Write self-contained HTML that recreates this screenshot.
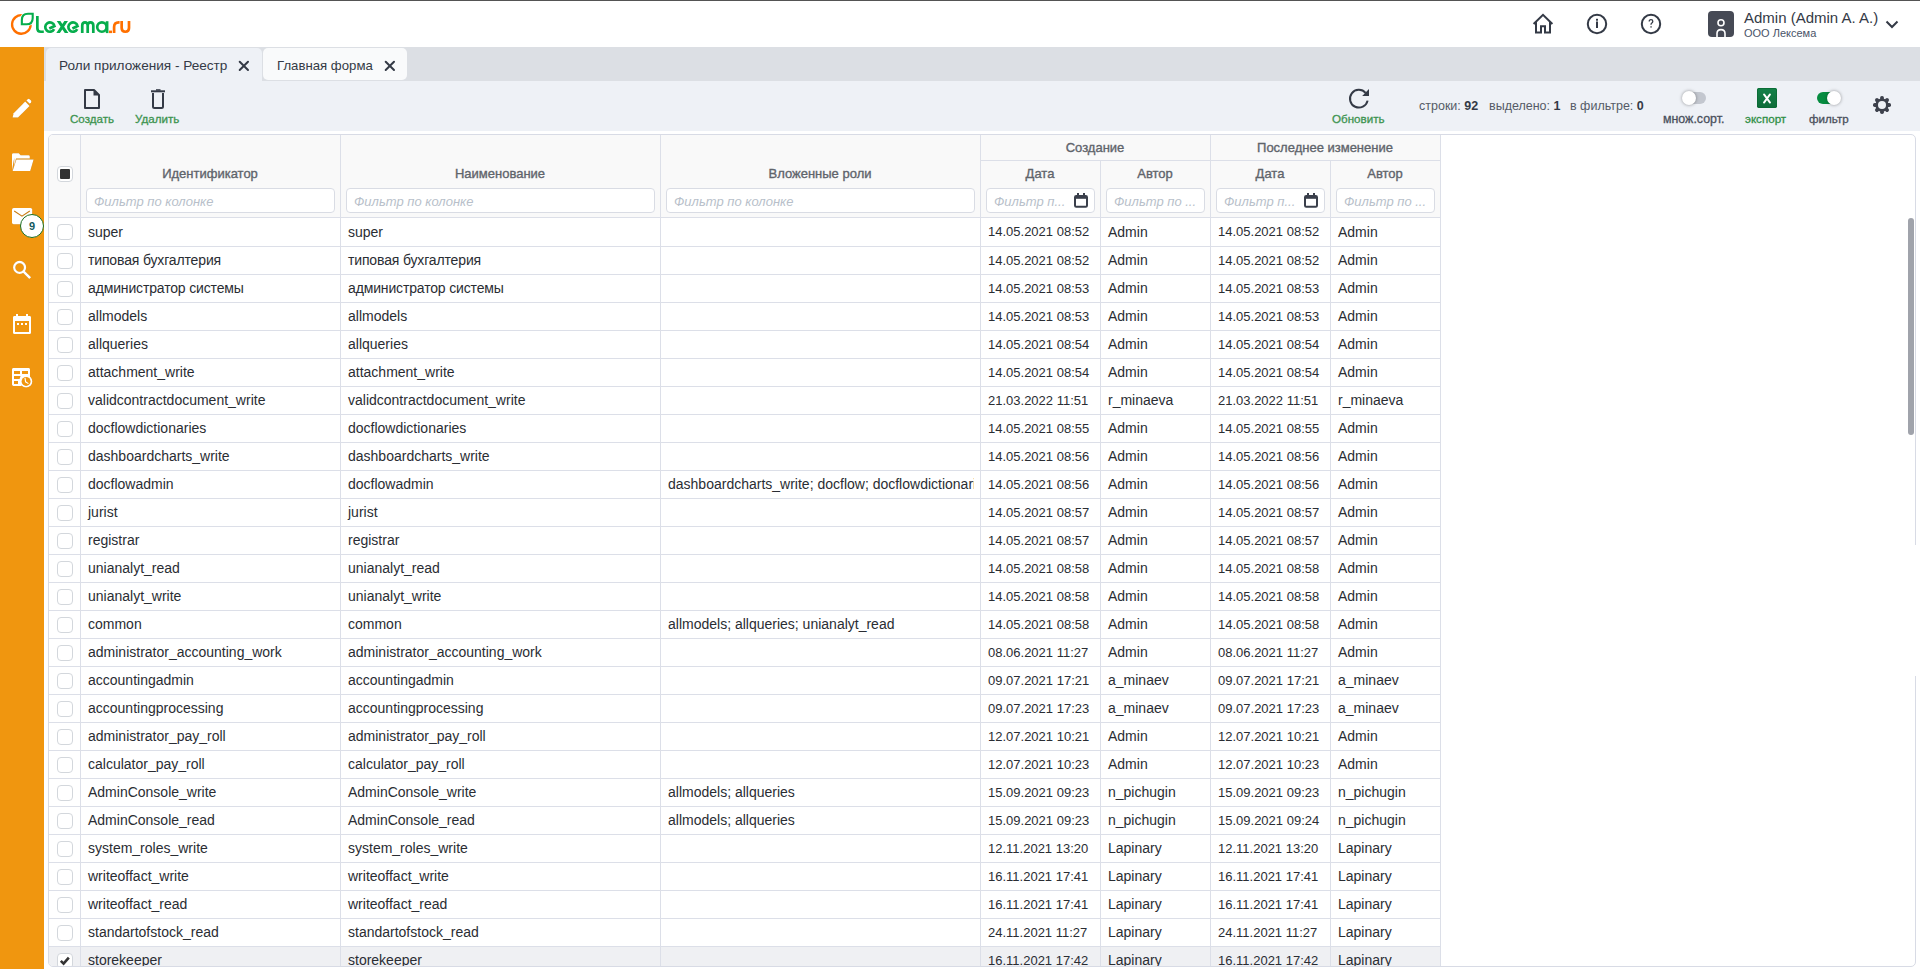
<!DOCTYPE html>
<html><head><meta charset="utf-8">
<style>
*{box-sizing:border-box;margin:0;padding:0}
html,body{width:1920px;height:969px;overflow:hidden;background:#fff;font-family:"Liberation Sans",sans-serif;color:#212529}
.abs{position:absolute}
#topline{position:absolute;left:0;top:0;width:1920px;height:1px;background:#545454}
#sidebar{position:absolute;left:0;top:47px;width:44px;height:922px;background:#f0960f}
#tabbar{position:absolute;left:44px;top:47px;width:1876px;height:34px;background:#dcdfe4}
.tab{position:absolute;top:48px;height:33px;border-radius:5px 5px 0 0;font-size:13.6px;color:#343a46;white-space:nowrap}
#toolbar{position:absolute;left:44px;top:81px;width:1876px;height:50px;background:#eef1f6}
.tbl{font-size:11.6px;font-weight:normal;-webkit-text-stroke:0.3px currentColor;color:#3d9450;position:absolute;white-space:nowrap}
#grid{position:absolute;left:48px;top:134px;width:1868px;height:833px;border:1px solid #d8dbe5;border-radius:5px;overflow:hidden;background:#fff}
#head{position:absolute;left:0;top:0;width:1391px;height:82px;background:#f9f9f9}
.vl{position:absolute;width:1px;background:#dcdfe8}
.hl{position:absolute;left:0;width:1391px;height:1px;background:#dcdfe8}
.row{position:absolute;left:0;width:1391px}
.row.sel{background:#eff0f3}
.c{position:absolute;padding-left:7px;font-size:14px;white-space:nowrap;overflow:hidden;color:#2a2d33}
.c.date{font-size:13px}
.cb{position:absolute;left:8px;width:16px;height:16px;border:1px solid #d3d7dc;border-radius:4px;background:#fff}
.hd{position:absolute;margin-top:1px;font-size:13px;font-weight:normal;-webkit-text-stroke:0.35px currentColor;color:#60646b;text-align:center;white-space:nowrap}
.fi{position:absolute;top:53px;height:25px;border:1px solid #d9dce4;border-radius:4px;background:#fff;font-size:13px;font-style:italic;color:#b8bfca;padding-left:7px;line-height:25px;white-space:nowrap;overflow:hidden}
</style></head><body>
<div id="topline"></div>

<!-- logo -->
<svg class="abs" style="left:0;top:0" width="140" height="47" viewBox="0 0 140 47"><defs><clipPath id="xclip"><rect x="50" y="21" width="25" height="12.1"/></clipPath></defs>
  <path d="M 22.48 15.22 A 9.3 9.3 0 1 0 30.65 24.45" fill="none" stroke="#ff7000" stroke-width="2.3"/>
  <path d="M 21.85 24.3 L 21.85 20 Q 21.85 13.8 28 13.8 L 32.7 13.8 L 32.7 18 Q 32.7 24.3 26.5 24.3 Z" fill="none" stroke="#fff" stroke-width="3.6" stroke-linejoin="miter"/>
  <path d="M 21.85 24.3 L 21.85 20 Q 21.85 13.8 28 13.8 L 32.7 13.8 L 32.7 18 Q 32.7 24.3 26.5 24.3 Z" fill="none" stroke="#06ad4c" stroke-width="2.1" stroke-linejoin="miter"/>
  <g fill="none" stroke="#06ad4c" stroke-width="2.7">
    <path d="M 37.35 15.9 L 37.35 28.2 Q 37.35 31.75 40.9 31.75 L 43.8 31.75"/>
    <path d="M 54.47 25.75 A 4.7 4.7 0 1 0 54.14 29.18 M 49.3 28.5 L 55.6 25.5"/>
    <path d="M 57.6 19.6 L 67.6 34.5 M 67.1 19.6 L 57.1 34.5" stroke-width="3" clip-path="url(#xclip)"/>
    <path d="M 77.57 25.75 A 4.7 4.7 0 1 0 77.24 29.18 M 72.4 28.5 L 78.7 25.5"/>
    <path d="M 82.25 33.1 L 82.25 25.6 Q 82.25 22.35 85 22.35 Q 87.7 22.35 87.7 25.6 L 87.7 33.1 M 87.7 25.6 Q 87.7 22.35 90.5 22.35 Q 93.3 22.35 93.3 25.6 L 93.3 33.1"/>
    <circle cx="101.9" cy="27.05" r="4.7"/>
    <path d="M 107.1 21.2 L 107.1 33.1"/>
  </g>
  <g fill="none" stroke="#ff7000" stroke-width="2.7">
    <path d="M 109 31.85 L 112 31.85" stroke-width="2.5"/>
    <path d="M 114.1 33.1 L 114.1 27 Q 114.1 22.35 118.8 22.35 L 119.6 22.35"/>
    <path d="M 121.65 21 L 121.65 28 Q 121.65 31.75 125.3 31.75 Q 129 31.75 129 28 L 129 21"/>
  </g>
</svg>
<!-- header right icons -->
<svg class="abs" style="left:1530px;top:12px" width="26" height="24" viewBox="0 0 26 24">
  <path d="M 3.6 12 L 13 2.8 L 22.4 12 M 6 10 L 6 20.5 L 11 20.5 L 11 14.2 L 15 14.2 L 15 20.5 L 20 20.5 L 20 10" fill="none" stroke="#343a46" stroke-width="2" stroke-linejoin="miter"/>
</svg>
<svg class="abs" style="left:1585px;top:12px" width="24" height="24" viewBox="0 0 24 24">
  <circle cx="12" cy="12" r="9.2" fill="none" stroke="#343a46" stroke-width="2"/>
  <rect x="11" y="9.5" width="2" height="6.5" fill="#343a46"/><rect x="11" y="6.8" width="2" height="1.9" fill="#343a46"/>
</svg>
<svg class="abs" style="left:1639px;top:12px" width="24" height="24" viewBox="0 0 24 24">
  <circle cx="12" cy="12" r="9.2" fill="none" stroke="#343a46" stroke-width="2"/>
  <path d="M 10.2 9.6 Q 10.2 7.6 12 7.6 Q 13.8 7.6 13.8 9.3 Q 13.8 10.5 12.6 11.2 Q 12 11.6 12 12.8" fill="none" stroke="#343a46" stroke-width="1.3"/>
  <rect x="11.4" y="14.2" width="1.3" height="1.4" fill="#343a46"/>
</svg>
<svg class="abs" style="left:1708px;top:11px" width="26" height="26" viewBox="0 0 26 26">
  <rect x="0" y="0" width="26" height="26" rx="4" fill="#464a55"/>
  <circle cx="13" cy="11.7" r="3" fill="none" stroke="#fff" stroke-width="1.6"/>
  <path d="M 9 26 L 9 22.5 Q 9 18.6 13 18.6 Q 17 18.6 17 22.5 L 17 26" fill="none" stroke="#fff" stroke-width="1.6"/>
</svg>
<div class="abs" style="left:1744px;top:9px;font-size:15px;color:#343a46;white-space:nowrap;line-height:18px">Admin (Admin A. A.)</div>
<div class="abs" style="left:1744px;top:27px;font-size:11px;color:#4a5468;white-space:nowrap;line-height:13px">ООО Лексема</div>
<svg class="abs" style="left:1884px;top:18px" width="16" height="12" viewBox="0 0 16 12">
  <path d="M 2.5 3.5 L 8 9 L 13.5 3.5" fill="none" stroke="#343a46" stroke-width="2"/>
</svg>

<!-- sidebar -->
<div id="sidebar"></div>
<svg class="abs" style="left:0;top:80px;filter:drop-shadow(0.8px 0.8px 0.6px rgba(90,50,0,.45))" width="44" height="320" viewBox="0 80 44 320">
  <g fill="#fff">
    <!-- pencil -->
    <path d="M 12.6 117.6 L 13.6 113.2 L 25.2 101.6 L 29.6 106 L 18 117.6 Z"/>
    <path d="M 26.4 100.4 L 27.6 99.2 Q 28.6 98.4 29.6 99.2 L 31 100.6 Q 31.8 101.6 31 102.6 L 29.8 103.8 Z" />
    <!-- folder -->
    <path d="M 12 170.5 L 12 154.5 Q 12 153.3 13.2 153.3 L 18.8 153.3 L 20.6 155.2 L 28.6 155.2 Q 29.8 155.2 29.8 156.4 L 29.8 158.6 L 16 158.6 L 14.2 166 L 14.2 158 Z"/>
    <path d="M 16.4 159.6 L 33.6 159.6 L 30.2 171 L 12.6 171 Z"/>
    <!-- mail -->
    <rect x="12" y="208" width="20.2" height="16.2" rx="1.6"/>
    <!-- search -->
    <circle cx="19.6" cy="267.4" r="5.4" fill="none" stroke="#fff" stroke-width="2.3"/>
    <path d="M 23.4 271.4 L 30.2 278.2" stroke="#fff" stroke-width="2.6"/>
    <!-- calendar -->
    <path fill-rule="evenodd" d="M 13 317.2 Q 13 316 14.2 316 L 29.8 316 Q 31 316 31 317.2 L 31 332.8 Q 31 334 29.8 334 L 14.2 334 Q 13 334 13 332.8 Z M 15 321 L 15 332 L 29 332 L 29 321 Z"/>
    <rect x="16" y="314" width="2" height="3"/><rect x="26" y="314" width="2" height="3"/>
    <rect x="17" y="323" width="2" height="2"/><rect x="21" y="323" width="2" height="2"/><rect x="25" y="323" width="2" height="2"/>
    <!-- table clock -->
    <path fill-rule="evenodd" d="M 12 369.4 Q 12 368 13.4 368 L 28.6 368 Q 30 368 30 369.4 L 30 377 L 21 386 L 13.4 386 Q 12 386 12 384.6 Z M 14 371 L 14 374 L 20 374 L 20 371 Z M 22 371 L 22 374 L 28 374 L 28 371 Z M 14 376 L 14 379 L 19.5 379 L 20.5 376 Z M 14 381 L 14 384 L 18 384 L 18 381 Z"/>
    <circle cx="26.1" cy="381.4" r="6.2"/>
  </g>
  <path d="M 14.2 211 L 22 216.2 L 29.8 211" fill="none" stroke="#c97c12" stroke-width="1.1"/>
  <circle cx="26.1" cy="381.4" r="4.5" fill="#f0960f"/>
  <path d="M 25 377.8 L 25.6 381.8 L 28.4 383.6" fill="none" stroke="#fff" stroke-width="1.1"/>
</svg>
<div class="abs" style="left:20px;top:214px;width:24px;height:24px;border-radius:12px;border:1.4px solid #1a6e20;background:#fff;color:#13595e;font-weight:bold;font-size:11px;text-align:center;line-height:23px">9</div>

<!-- tabs -->
<div id="tabbar"></div>
<div class="tab" style="left:46px;width:216px;height:33px;background:#eef1f6">
  <span class="abs" style="left:13px;top:10px;line-height:16px">Роли приложения - Реестр</span>
  <svg class="abs" style="left:192px;top:12px" width="12" height="12" viewBox="0 0 12 12"><path d="M 1.7 1.7 L 10 10 M 10 1.7 L 1.7 10" stroke="#343a46" stroke-width="2" stroke-linecap="round"/></svg>
</div>
<div class="tab" style="left:263px;width:144px;height:32px;background:#f9fafb;border-radius:5px;font-size:13.2px">
  <span class="abs" style="left:14px;top:10px;line-height:16px">Главная форма</span>
  <svg class="abs" style="left:121px;top:12px" width="12" height="12" viewBox="0 0 12 12"><path d="M 1.7 1.7 L 10 10 M 10 1.7 L 1.7 10" stroke="#343a46" stroke-width="2" stroke-linecap="round"/></svg>
</div>

<!-- toolbar -->
<div id="toolbar"></div>
<svg class="abs" style="left:83px;top:88px" width="18" height="22" viewBox="0 0 18 22">
  <path d="M 2 2 L 11 2 L 16 7 L 16 20 L 2 20 Z" fill="none" stroke="#343a46" stroke-width="2" stroke-linejoin="round"/>
  <path d="M 10.5 2 L 10.5 7.5 L 16 7.5 Z" fill="#343a46"/>
</svg>
<div class="tbl" style="left:70px;top:112px">Создать</div>
<svg class="abs" style="left:149px;top:88px" width="18" height="22" viewBox="0 0 18 22">
  <rect x="2" y="2.3" width="14" height="2" fill="#343a46"/>
  <rect x="7" y="1.2" width="4.5" height="1.5" fill="#343a46"/>
  <path d="M 4 5 L 4 18.5 Q 4 20 5.5 20 L 12.5 20 Q 14 20 14 18.5 L 14 5" fill="none" stroke="#343a46" stroke-width="2"/>
</svg>
<div class="tbl" style="left:135px;top:112px">Удалить</div>

<svg class="abs" style="left:1347px;top:86px" width="24" height="24" viewBox="0 0 24 24">
  <path d="M 18.6 6.8 A 8.9 8.9 0 1 0 20.6 14.6" fill="none" stroke="#343a46" stroke-width="2"/>
  <path d="M 22 3 L 22 10 L 15.2 10 Z" fill="#343a46"/>
</svg>
<div class="tbl" style="left:1332px;top:112px">Обновить</div>

<div class="abs" style="left:1419px;top:99px;font-size:12.5px;color:#555b66;white-space:nowrap;line-height:14px">строки: <b style="color:#343a46">92</b></div>
<div class="abs" style="left:1489px;top:99px;font-size:12.5px;color:#555b66;white-space:nowrap;line-height:14px">выделено: <b style="color:#343a46">1</b></div>
<div class="abs" style="left:1570px;top:99px;font-size:12.5px;color:#555b66;white-space:nowrap;line-height:14px">в фильтре: <b style="color:#343a46">0</b></div>

<!-- toggle 1 -->
<div class="abs" style="left:1683px;top:92px;width:23px;height:12px;border-radius:6px;background:#c3c7cf"></div>
<div class="abs" style="left:1682px;top:91px;width:14px;height:14px;border-radius:7px;background:#fff;box-shadow:0 0 3.5px rgba(0,0,0,.4)"></div>
<div class="tbl" style="left:1663px;top:112px;color:#4a505c;font-size:12.4px">множ.сорт.</div>
<!-- excel -->
<svg class="abs" style="left:1757px;top:88px" width="20" height="20" viewBox="0 0 20 20"><defs><linearGradient id="xg" x1="0" y1="0" x2="0" y2="1"><stop offset="0" stop-color="#148249"/><stop offset="1" stop-color="#0e6b38"/></linearGradient></defs><rect x="0" y="0" width="20" height="20" rx="1.8" fill="url(#xg)"/><rect x="0.5" y="0.5" width="19" height="19" rx="1.5" fill="none" stroke="#0a6a33" stroke-width="0.8"/><path d="M 7 6.4 L 13 14.6 M 13 6.4 L 7 14.6" stroke="#fff" stroke-width="1.9" stroke-linecap="round"/></svg>
<div class="tbl" style="left:1745px;top:112px;color:#2f8f45">экспорт</div>
<!-- toggle 2 -->
<div class="abs" style="left:1817px;top:92px;width:23px;height:12px;border-radius:6px;background:#068c40"></div>
<div class="abs" style="left:1827px;top:91px;width:14px;height:14px;border-radius:7px;background:#fff;box-shadow:0 0 3.5px rgba(0,0,0,.4)"></div>
<div class="tbl" style="left:1809px;top:112px;color:#4a505c">фильтр</div>
<!-- gear -->
<svg class="abs" style="left:1872px;top:95px" width="20" height="20" viewBox="0 0 20 20">
  <g fill="#3d414c">
    <circle cx="10" cy="10" r="6.6"/>
    <rect x="8.1" y="1" width="3.8" height="18" rx="1.7"/>
    <rect x="8.1" y="1" width="3.8" height="18" rx="1.7" transform="rotate(45 10 10)"/>
    <rect x="8.1" y="1" width="3.8" height="18" rx="1.7" transform="rotate(90 10 10)"/>
    <rect x="8.1" y="1" width="3.8" height="18" rx="1.7" transform="rotate(135 10 10)"/>
  </g>
  <circle cx="10" cy="10" r="4" fill="#eef1f6"/>
</svg>

<!-- grid -->
<div id="grid">
  <div id="head"></div>
  <div class="row" style="top:83px;height:28px"></div>
<div class="hl" style="top:111px"></div>
<div class="cb" style="top:89px"></div>
<div class="c" style="left:32px;top:83px;width:253px;height:28px;line-height:28px">super</div>
<div class="c" style="left:292px;top:83px;width:313px;height:28px;line-height:28px">super</div>
<div class="c date" style="left:932px;top:83px;width:113px;height:28px;line-height:28px">14.05.2021 08:52</div>
<div class="c" style="left:1052px;top:83px;width:103px;height:28px;line-height:28px">Admin</div>
<div class="c date" style="left:1162px;top:83px;width:113px;height:28px;line-height:28px">14.05.2021 08:52</div>
<div class="c" style="left:1282px;top:83px;width:103px;height:28px;line-height:28px">Admin</div>
<div class="row" style="top:112px;height:27px"></div>
<div class="hl" style="top:139px"></div>
<div class="cb" style="top:118px"></div>
<div class="c" style="left:32px;top:112px;width:253px;height:27px;line-height:27px;letter-spacing:-0.15px">типовая бухгалтерия</div>
<div class="c" style="left:292px;top:112px;width:313px;height:27px;line-height:27px;letter-spacing:-0.15px">типовая бухгалтерия</div>
<div class="c date" style="left:932px;top:112px;width:113px;height:27px;line-height:27px">14.05.2021 08:52</div>
<div class="c" style="left:1052px;top:112px;width:103px;height:27px;line-height:27px">Admin</div>
<div class="c date" style="left:1162px;top:112px;width:113px;height:27px;line-height:27px">14.05.2021 08:52</div>
<div class="c" style="left:1282px;top:112px;width:103px;height:27px;line-height:27px">Admin</div>
<div class="row" style="top:140px;height:27px"></div>
<div class="hl" style="top:167px"></div>
<div class="cb" style="top:146px"></div>
<div class="c" style="left:32px;top:140px;width:253px;height:27px;line-height:27px;letter-spacing:-0.15px">администратор системы</div>
<div class="c" style="left:292px;top:140px;width:313px;height:27px;line-height:27px;letter-spacing:-0.15px">администратор системы</div>
<div class="c date" style="left:932px;top:140px;width:113px;height:27px;line-height:27px">14.05.2021 08:53</div>
<div class="c" style="left:1052px;top:140px;width:103px;height:27px;line-height:27px">Admin</div>
<div class="c date" style="left:1162px;top:140px;width:113px;height:27px;line-height:27px">14.05.2021 08:53</div>
<div class="c" style="left:1282px;top:140px;width:103px;height:27px;line-height:27px">Admin</div>
<div class="row" style="top:168px;height:27px"></div>
<div class="hl" style="top:195px"></div>
<div class="cb" style="top:174px"></div>
<div class="c" style="left:32px;top:168px;width:253px;height:27px;line-height:27px">allmodels</div>
<div class="c" style="left:292px;top:168px;width:313px;height:27px;line-height:27px">allmodels</div>
<div class="c date" style="left:932px;top:168px;width:113px;height:27px;line-height:27px">14.05.2021 08:53</div>
<div class="c" style="left:1052px;top:168px;width:103px;height:27px;line-height:27px">Admin</div>
<div class="c date" style="left:1162px;top:168px;width:113px;height:27px;line-height:27px">14.05.2021 08:53</div>
<div class="c" style="left:1282px;top:168px;width:103px;height:27px;line-height:27px">Admin</div>
<div class="row" style="top:196px;height:27px"></div>
<div class="hl" style="top:223px"></div>
<div class="cb" style="top:202px"></div>
<div class="c" style="left:32px;top:196px;width:253px;height:27px;line-height:27px">allqueries</div>
<div class="c" style="left:292px;top:196px;width:313px;height:27px;line-height:27px">allqueries</div>
<div class="c date" style="left:932px;top:196px;width:113px;height:27px;line-height:27px">14.05.2021 08:54</div>
<div class="c" style="left:1052px;top:196px;width:103px;height:27px;line-height:27px">Admin</div>
<div class="c date" style="left:1162px;top:196px;width:113px;height:27px;line-height:27px">14.05.2021 08:54</div>
<div class="c" style="left:1282px;top:196px;width:103px;height:27px;line-height:27px">Admin</div>
<div class="row" style="top:224px;height:27px"></div>
<div class="hl" style="top:251px"></div>
<div class="cb" style="top:230px"></div>
<div class="c" style="left:32px;top:224px;width:253px;height:27px;line-height:27px">attachment_write</div>
<div class="c" style="left:292px;top:224px;width:313px;height:27px;line-height:27px">attachment_write</div>
<div class="c date" style="left:932px;top:224px;width:113px;height:27px;line-height:27px">14.05.2021 08:54</div>
<div class="c" style="left:1052px;top:224px;width:103px;height:27px;line-height:27px">Admin</div>
<div class="c date" style="left:1162px;top:224px;width:113px;height:27px;line-height:27px">14.05.2021 08:54</div>
<div class="c" style="left:1282px;top:224px;width:103px;height:27px;line-height:27px">Admin</div>
<div class="row" style="top:252px;height:27px"></div>
<div class="hl" style="top:279px"></div>
<div class="cb" style="top:258px"></div>
<div class="c" style="left:32px;top:252px;width:253px;height:27px;line-height:27px">validcontractdocument_write</div>
<div class="c" style="left:292px;top:252px;width:313px;height:27px;line-height:27px">validcontractdocument_write</div>
<div class="c date" style="left:932px;top:252px;width:113px;height:27px;line-height:27px">21.03.2022 11:51</div>
<div class="c" style="left:1052px;top:252px;width:103px;height:27px;line-height:27px">r_minaeva</div>
<div class="c date" style="left:1162px;top:252px;width:113px;height:27px;line-height:27px">21.03.2022 11:51</div>
<div class="c" style="left:1282px;top:252px;width:103px;height:27px;line-height:27px">r_minaeva</div>
<div class="row" style="top:280px;height:27px"></div>
<div class="hl" style="top:307px"></div>
<div class="cb" style="top:286px"></div>
<div class="c" style="left:32px;top:280px;width:253px;height:27px;line-height:27px">docflowdictionaries</div>
<div class="c" style="left:292px;top:280px;width:313px;height:27px;line-height:27px">docflowdictionaries</div>
<div class="c date" style="left:932px;top:280px;width:113px;height:27px;line-height:27px">14.05.2021 08:55</div>
<div class="c" style="left:1052px;top:280px;width:103px;height:27px;line-height:27px">Admin</div>
<div class="c date" style="left:1162px;top:280px;width:113px;height:27px;line-height:27px">14.05.2021 08:55</div>
<div class="c" style="left:1282px;top:280px;width:103px;height:27px;line-height:27px">Admin</div>
<div class="row" style="top:308px;height:27px"></div>
<div class="hl" style="top:335px"></div>
<div class="cb" style="top:314px"></div>
<div class="c" style="left:32px;top:308px;width:253px;height:27px;line-height:27px">dashboardcharts_write</div>
<div class="c" style="left:292px;top:308px;width:313px;height:27px;line-height:27px">dashboardcharts_write</div>
<div class="c date" style="left:932px;top:308px;width:113px;height:27px;line-height:27px">14.05.2021 08:56</div>
<div class="c" style="left:1052px;top:308px;width:103px;height:27px;line-height:27px">Admin</div>
<div class="c date" style="left:1162px;top:308px;width:113px;height:27px;line-height:27px">14.05.2021 08:56</div>
<div class="c" style="left:1282px;top:308px;width:103px;height:27px;line-height:27px">Admin</div>
<div class="row" style="top:336px;height:27px"></div>
<div class="hl" style="top:363px"></div>
<div class="cb" style="top:342px"></div>
<div class="c" style="left:32px;top:336px;width:253px;height:27px;line-height:27px">docflowadmin</div>
<div class="c" style="left:292px;top:336px;width:313px;height:27px;line-height:27px">docflowadmin</div>
<div class="c" style="left:612px;top:336px;width:313px;height:27px;line-height:27px">dashboardcharts_write; docflow; docflowdictionaries</div>
<div class="c date" style="left:932px;top:336px;width:113px;height:27px;line-height:27px">14.05.2021 08:56</div>
<div class="c" style="left:1052px;top:336px;width:103px;height:27px;line-height:27px">Admin</div>
<div class="c date" style="left:1162px;top:336px;width:113px;height:27px;line-height:27px">14.05.2021 08:56</div>
<div class="c" style="left:1282px;top:336px;width:103px;height:27px;line-height:27px">Admin</div>
<div class="row" style="top:364px;height:27px"></div>
<div class="hl" style="top:391px"></div>
<div class="cb" style="top:370px"></div>
<div class="c" style="left:32px;top:364px;width:253px;height:27px;line-height:27px">jurist</div>
<div class="c" style="left:292px;top:364px;width:313px;height:27px;line-height:27px">jurist</div>
<div class="c date" style="left:932px;top:364px;width:113px;height:27px;line-height:27px">14.05.2021 08:57</div>
<div class="c" style="left:1052px;top:364px;width:103px;height:27px;line-height:27px">Admin</div>
<div class="c date" style="left:1162px;top:364px;width:113px;height:27px;line-height:27px">14.05.2021 08:57</div>
<div class="c" style="left:1282px;top:364px;width:103px;height:27px;line-height:27px">Admin</div>
<div class="row" style="top:392px;height:27px"></div>
<div class="hl" style="top:419px"></div>
<div class="cb" style="top:398px"></div>
<div class="c" style="left:32px;top:392px;width:253px;height:27px;line-height:27px">registrar</div>
<div class="c" style="left:292px;top:392px;width:313px;height:27px;line-height:27px">registrar</div>
<div class="c date" style="left:932px;top:392px;width:113px;height:27px;line-height:27px">14.05.2021 08:57</div>
<div class="c" style="left:1052px;top:392px;width:103px;height:27px;line-height:27px">Admin</div>
<div class="c date" style="left:1162px;top:392px;width:113px;height:27px;line-height:27px">14.05.2021 08:57</div>
<div class="c" style="left:1282px;top:392px;width:103px;height:27px;line-height:27px">Admin</div>
<div class="row" style="top:420px;height:27px"></div>
<div class="hl" style="top:447px"></div>
<div class="cb" style="top:426px"></div>
<div class="c" style="left:32px;top:420px;width:253px;height:27px;line-height:27px">unianalyt_read</div>
<div class="c" style="left:292px;top:420px;width:313px;height:27px;line-height:27px">unianalyt_read</div>
<div class="c date" style="left:932px;top:420px;width:113px;height:27px;line-height:27px">14.05.2021 08:58</div>
<div class="c" style="left:1052px;top:420px;width:103px;height:27px;line-height:27px">Admin</div>
<div class="c date" style="left:1162px;top:420px;width:113px;height:27px;line-height:27px">14.05.2021 08:58</div>
<div class="c" style="left:1282px;top:420px;width:103px;height:27px;line-height:27px">Admin</div>
<div class="row" style="top:448px;height:27px"></div>
<div class="hl" style="top:475px"></div>
<div class="cb" style="top:454px"></div>
<div class="c" style="left:32px;top:448px;width:253px;height:27px;line-height:27px">unianalyt_write</div>
<div class="c" style="left:292px;top:448px;width:313px;height:27px;line-height:27px">unianalyt_write</div>
<div class="c date" style="left:932px;top:448px;width:113px;height:27px;line-height:27px">14.05.2021 08:58</div>
<div class="c" style="left:1052px;top:448px;width:103px;height:27px;line-height:27px">Admin</div>
<div class="c date" style="left:1162px;top:448px;width:113px;height:27px;line-height:27px">14.05.2021 08:58</div>
<div class="c" style="left:1282px;top:448px;width:103px;height:27px;line-height:27px">Admin</div>
<div class="row" style="top:476px;height:27px"></div>
<div class="hl" style="top:503px"></div>
<div class="cb" style="top:482px"></div>
<div class="c" style="left:32px;top:476px;width:253px;height:27px;line-height:27px">common</div>
<div class="c" style="left:292px;top:476px;width:313px;height:27px;line-height:27px">common</div>
<div class="c" style="left:612px;top:476px;width:313px;height:27px;line-height:27px">allmodels; allqueries; unianalyt_read</div>
<div class="c date" style="left:932px;top:476px;width:113px;height:27px;line-height:27px">14.05.2021 08:58</div>
<div class="c" style="left:1052px;top:476px;width:103px;height:27px;line-height:27px">Admin</div>
<div class="c date" style="left:1162px;top:476px;width:113px;height:27px;line-height:27px">14.05.2021 08:58</div>
<div class="c" style="left:1282px;top:476px;width:103px;height:27px;line-height:27px">Admin</div>
<div class="row" style="top:504px;height:27px"></div>
<div class="hl" style="top:531px"></div>
<div class="cb" style="top:510px"></div>
<div class="c" style="left:32px;top:504px;width:253px;height:27px;line-height:27px">administrator_accounting_work</div>
<div class="c" style="left:292px;top:504px;width:313px;height:27px;line-height:27px">administrator_accounting_work</div>
<div class="c date" style="left:932px;top:504px;width:113px;height:27px;line-height:27px">08.06.2021 11:27</div>
<div class="c" style="left:1052px;top:504px;width:103px;height:27px;line-height:27px">Admin</div>
<div class="c date" style="left:1162px;top:504px;width:113px;height:27px;line-height:27px">08.06.2021 11:27</div>
<div class="c" style="left:1282px;top:504px;width:103px;height:27px;line-height:27px">Admin</div>
<div class="row" style="top:532px;height:27px"></div>
<div class="hl" style="top:559px"></div>
<div class="cb" style="top:538px"></div>
<div class="c" style="left:32px;top:532px;width:253px;height:27px;line-height:27px">accountingadmin</div>
<div class="c" style="left:292px;top:532px;width:313px;height:27px;line-height:27px">accountingadmin</div>
<div class="c date" style="left:932px;top:532px;width:113px;height:27px;line-height:27px">09.07.2021 17:21</div>
<div class="c" style="left:1052px;top:532px;width:103px;height:27px;line-height:27px">a_minaev</div>
<div class="c date" style="left:1162px;top:532px;width:113px;height:27px;line-height:27px">09.07.2021 17:21</div>
<div class="c" style="left:1282px;top:532px;width:103px;height:27px;line-height:27px">a_minaev</div>
<div class="row" style="top:560px;height:27px"></div>
<div class="hl" style="top:587px"></div>
<div class="cb" style="top:566px"></div>
<div class="c" style="left:32px;top:560px;width:253px;height:27px;line-height:27px">accountingprocessing</div>
<div class="c" style="left:292px;top:560px;width:313px;height:27px;line-height:27px">accountingprocessing</div>
<div class="c date" style="left:932px;top:560px;width:113px;height:27px;line-height:27px">09.07.2021 17:23</div>
<div class="c" style="left:1052px;top:560px;width:103px;height:27px;line-height:27px">a_minaev</div>
<div class="c date" style="left:1162px;top:560px;width:113px;height:27px;line-height:27px">09.07.2021 17:23</div>
<div class="c" style="left:1282px;top:560px;width:103px;height:27px;line-height:27px">a_minaev</div>
<div class="row" style="top:588px;height:27px"></div>
<div class="hl" style="top:615px"></div>
<div class="cb" style="top:594px"></div>
<div class="c" style="left:32px;top:588px;width:253px;height:27px;line-height:27px">administrator_pay_roll</div>
<div class="c" style="left:292px;top:588px;width:313px;height:27px;line-height:27px">administrator_pay_roll</div>
<div class="c date" style="left:932px;top:588px;width:113px;height:27px;line-height:27px">12.07.2021 10:21</div>
<div class="c" style="left:1052px;top:588px;width:103px;height:27px;line-height:27px">Admin</div>
<div class="c date" style="left:1162px;top:588px;width:113px;height:27px;line-height:27px">12.07.2021 10:21</div>
<div class="c" style="left:1282px;top:588px;width:103px;height:27px;line-height:27px">Admin</div>
<div class="row" style="top:616px;height:27px"></div>
<div class="hl" style="top:643px"></div>
<div class="cb" style="top:622px"></div>
<div class="c" style="left:32px;top:616px;width:253px;height:27px;line-height:27px">calculator_pay_roll</div>
<div class="c" style="left:292px;top:616px;width:313px;height:27px;line-height:27px">calculator_pay_roll</div>
<div class="c date" style="left:932px;top:616px;width:113px;height:27px;line-height:27px">12.07.2021 10:23</div>
<div class="c" style="left:1052px;top:616px;width:103px;height:27px;line-height:27px">Admin</div>
<div class="c date" style="left:1162px;top:616px;width:113px;height:27px;line-height:27px">12.07.2021 10:23</div>
<div class="c" style="left:1282px;top:616px;width:103px;height:27px;line-height:27px">Admin</div>
<div class="row" style="top:644px;height:27px"></div>
<div class="hl" style="top:671px"></div>
<div class="cb" style="top:650px"></div>
<div class="c" style="left:32px;top:644px;width:253px;height:27px;line-height:27px">AdminConsole_write</div>
<div class="c" style="left:292px;top:644px;width:313px;height:27px;line-height:27px">AdminConsole_write</div>
<div class="c" style="left:612px;top:644px;width:313px;height:27px;line-height:27px">allmodels; allqueries</div>
<div class="c date" style="left:932px;top:644px;width:113px;height:27px;line-height:27px">15.09.2021 09:23</div>
<div class="c" style="left:1052px;top:644px;width:103px;height:27px;line-height:27px">n_pichugin</div>
<div class="c date" style="left:1162px;top:644px;width:113px;height:27px;line-height:27px">15.09.2021 09:23</div>
<div class="c" style="left:1282px;top:644px;width:103px;height:27px;line-height:27px">n_pichugin</div>
<div class="row" style="top:672px;height:27px"></div>
<div class="hl" style="top:699px"></div>
<div class="cb" style="top:678px"></div>
<div class="c" style="left:32px;top:672px;width:253px;height:27px;line-height:27px">AdminConsole_read</div>
<div class="c" style="left:292px;top:672px;width:313px;height:27px;line-height:27px">AdminConsole_read</div>
<div class="c" style="left:612px;top:672px;width:313px;height:27px;line-height:27px">allmodels; allqueries</div>
<div class="c date" style="left:932px;top:672px;width:113px;height:27px;line-height:27px">15.09.2021 09:23</div>
<div class="c" style="left:1052px;top:672px;width:103px;height:27px;line-height:27px">n_pichugin</div>
<div class="c date" style="left:1162px;top:672px;width:113px;height:27px;line-height:27px">15.09.2021 09:24</div>
<div class="c" style="left:1282px;top:672px;width:103px;height:27px;line-height:27px">n_pichugin</div>
<div class="row" style="top:700px;height:27px"></div>
<div class="hl" style="top:727px"></div>
<div class="cb" style="top:706px"></div>
<div class="c" style="left:32px;top:700px;width:253px;height:27px;line-height:27px">system_roles_write</div>
<div class="c" style="left:292px;top:700px;width:313px;height:27px;line-height:27px">system_roles_write</div>
<div class="c date" style="left:932px;top:700px;width:113px;height:27px;line-height:27px">12.11.2021 13:20</div>
<div class="c" style="left:1052px;top:700px;width:103px;height:27px;line-height:27px">Lapinary</div>
<div class="c date" style="left:1162px;top:700px;width:113px;height:27px;line-height:27px">12.11.2021 13:20</div>
<div class="c" style="left:1282px;top:700px;width:103px;height:27px;line-height:27px">Lapinary</div>
<div class="row" style="top:728px;height:27px"></div>
<div class="hl" style="top:755px"></div>
<div class="cb" style="top:734px"></div>
<div class="c" style="left:32px;top:728px;width:253px;height:27px;line-height:27px">writeoffact_write</div>
<div class="c" style="left:292px;top:728px;width:313px;height:27px;line-height:27px">writeoffact_write</div>
<div class="c date" style="left:932px;top:728px;width:113px;height:27px;line-height:27px">16.11.2021 17:41</div>
<div class="c" style="left:1052px;top:728px;width:103px;height:27px;line-height:27px">Lapinary</div>
<div class="c date" style="left:1162px;top:728px;width:113px;height:27px;line-height:27px">16.11.2021 17:41</div>
<div class="c" style="left:1282px;top:728px;width:103px;height:27px;line-height:27px">Lapinary</div>
<div class="row" style="top:756px;height:27px"></div>
<div class="hl" style="top:783px"></div>
<div class="cb" style="top:762px"></div>
<div class="c" style="left:32px;top:756px;width:253px;height:27px;line-height:27px">writeoffact_read</div>
<div class="c" style="left:292px;top:756px;width:313px;height:27px;line-height:27px">writeoffact_read</div>
<div class="c date" style="left:932px;top:756px;width:113px;height:27px;line-height:27px">16.11.2021 17:41</div>
<div class="c" style="left:1052px;top:756px;width:103px;height:27px;line-height:27px">Lapinary</div>
<div class="c date" style="left:1162px;top:756px;width:113px;height:27px;line-height:27px">16.11.2021 17:41</div>
<div class="c" style="left:1282px;top:756px;width:103px;height:27px;line-height:27px">Lapinary</div>
<div class="row" style="top:784px;height:27px"></div>
<div class="hl" style="top:811px"></div>
<div class="cb" style="top:790px"></div>
<div class="c" style="left:32px;top:784px;width:253px;height:27px;line-height:27px">standartofstock_read</div>
<div class="c" style="left:292px;top:784px;width:313px;height:27px;line-height:27px">standartofstock_read</div>
<div class="c date" style="left:932px;top:784px;width:113px;height:27px;line-height:27px">24.11.2021 11:27</div>
<div class="c" style="left:1052px;top:784px;width:103px;height:27px;line-height:27px">Lapinary</div>
<div class="c date" style="left:1162px;top:784px;width:113px;height:27px;line-height:27px">24.11.2021 11:27</div>
<div class="c" style="left:1282px;top:784px;width:103px;height:27px;line-height:27px">Lapinary</div>
<div class="row sel" style="top:812px;height:27px"></div>
<div class="hl" style="top:839px"></div>
<div class="cb on" style="top:818px"><svg class="abs" style="left:0;top:0" width="14" height="14" viewBox="0 0 14 14"><path d="M 2.8 6.8 L 5.6 9.6 L 10.8 3.6" fill="none" stroke="#333" stroke-width="2.6"/></svg></div>
<div class="c" style="left:32px;top:812px;width:253px;height:27px;line-height:27px">storekeeper</div>
<div class="c" style="left:292px;top:812px;width:313px;height:27px;line-height:27px">storekeeper</div>
<div class="c date" style="left:932px;top:812px;width:113px;height:27px;line-height:27px">16.11.2021 17:42</div>
<div class="c" style="left:1052px;top:812px;width:103px;height:27px;line-height:27px">Lapinary</div>
<div class="c date" style="left:1162px;top:812px;width:113px;height:27px;line-height:27px">16.11.2021 17:42</div>
<div class="c" style="left:1282px;top:812px;width:103px;height:27px;line-height:27px">Lapinary</div>
  <div class="hl" style="top:82px"></div>
  <div class="abs" style="left:931px;top:25px;width:461px;height:1px;background:#dcdfe8"></div>
  <div class="vl" style="left:31px;top:0px;bottom:0"></div><div class="vl" style="left:291px;top:0px;bottom:0"></div><div class="vl" style="left:611px;top:0px;bottom:0"></div><div class="vl" style="left:931px;top:0px;bottom:0"></div><div class="vl" style="left:1051px;top:25px;bottom:0"></div><div class="vl" style="left:1161px;top:0px;bottom:0"></div><div class="vl" style="left:1281px;top:25px;bottom:0"></div><div class="vl" style="left:1391px;top:0px;bottom:0"></div>
  <!-- header checkbox -->
  <div class="cb" style="top:31px;border-color:#d3d7dc"><div class="abs" style="left:2px;top:2px;width:10px;height:10px;background:#333;border-radius:1px"></div></div>
  <div class="hd" style="left:31px;top:30px;width:260px;line-height:16px">Идентификатор</div>
  <div class="hd" style="left:291px;top:30px;width:320px;line-height:16px">Наименование</div>
  <div class="hd" style="left:611px;top:30px;width:320px;line-height:16px">Вложенные роли</div>
  <div class="hd" style="left:931px;top:4px;width:230px;line-height:16px">Создание</div>
  <div class="hd" style="left:1161px;top:4px;width:230px;line-height:16px">Последнее изменение</div>
  <div class="hd" style="left:931px;top:30px;width:120px;line-height:16px">Дата</div>
  <div class="hd" style="left:1051px;top:30px;width:110px;line-height:16px">Автор</div>
  <div class="hd" style="left:1161px;top:30px;width:120px;line-height:16px">Дата</div>
  <div class="hd" style="left:1281px;top:30px;width:110px;line-height:16px">Автор</div>
  <div class="fi" style="left:37px;width:249px">Фильтр по колонке</div>
  <div class="fi" style="left:297px;width:309px">Фильтр по колонке</div>
  <div class="fi" style="left:617px;width:309px">Фильтр по колонке</div>
  <div class="fi" style="left:937px;width:109px">Фильтр п...</div>
  <div class="fi" style="left:1057px;width:99px">Фильтр по ...</div>
  <div class="fi" style="left:1167px;width:109px">Фильтр п...</div>
  <div class="fi" style="left:1287px;width:99px">Фильтр по ...</div>
  <svg class="abs" style="left:1025px;top:57px" width="16" height="17" viewBox="0 0 16 17"><rect x="1" y="4" width="12" height="10.8" rx="1.2" fill="none" stroke="#3a3f4b" stroke-width="2"/><rect x="1" y="4" width="12" height="2.8" fill="#3a3f4b"/><rect x="3" y="1" width="2" height="3.5" fill="#3a3f4b"/><rect x="9" y="1" width="2" height="3.5" fill="#3a3f4b"/></svg>
  <svg class="abs" style="left:1255px;top:57px" width="16" height="17" viewBox="0 0 16 17"><rect x="1" y="4" width="12" height="10.8" rx="1.2" fill="none" stroke="#3a3f4b" stroke-width="2"/><rect x="1" y="4" width="12" height="2.8" fill="#3a3f4b"/><rect x="3" y="1" width="2" height="3.5" fill="#3a3f4b"/><rect x="9" y="1" width="2" height="3.5" fill="#3a3f4b"/></svg>
  <!-- scrollbar -->
  <div class="abs" style="left:1858.5px;top:83px;width:6.5px;height:217px;border-radius:3px;background:#a0a3ab"></div>
</div>
<div class="abs" style="left:1915px;top:545px;width:1px;height:131px;background:#fff"></div>
</body></html>
